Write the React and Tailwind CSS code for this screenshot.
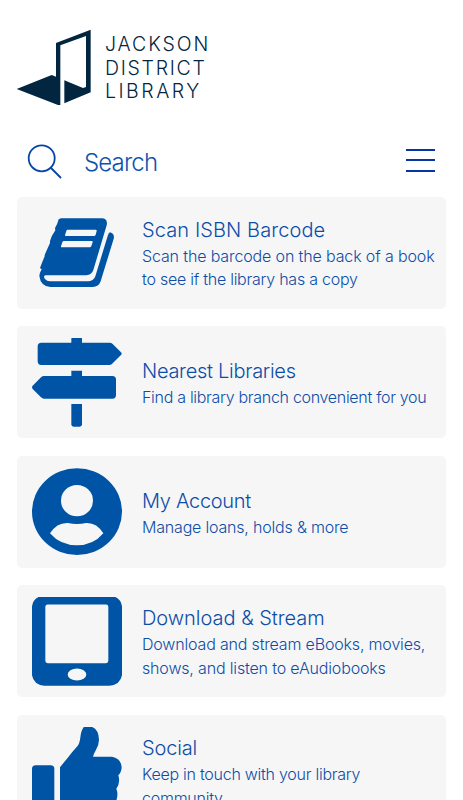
const cards = [
  {
    title: "Scan ISBN Barcode",
    titleClass: "tracking-[0.1px]",
    lines: [
      ["Scan the barcode on the back of a book", "tracking-[-0.13px]"],
      ["to see if the library has a copy", "tracking-[-0.25px]"],
    ],
    icon: BookIcon,
  },
  {
    title: "Nearest Libraries",
    titleClass: "tracking-[-0.28px]",
    lines: [["Find a library branch convenient for you", "tracking-[-0.3px]"]],
    icon: SignpostIcon,
  },
  {
    title: "My Account",
    titleClass: "tracking-[-0.3px]",
    lines: [["Manage loans, holds & more", "tracking-[-0.19px]"]],
    icon: AccountIcon,
  },
  {
    title: "Download & Stream",
    titleClass: "tracking-[-0.02px]",
    lines: [
      ["Download and stream eBooks, movies,", "tracking-[-0.17px]"],
      ["shows, and listen to eAudiobooks", "tracking-[-0.16px]"],
    ],
    icon: TabletIcon,
  },
  {
    title: "Social",
    titleClass: "tracking-[-0.15px]",
    lines: [
      ["Keep in touch with your library", "tracking-[-0.26px]"],
      ["community", "tracking-[-0.25px]"],
    ],
    icon: ThumbIcon,
  },
];

const iconClass = "mt-[2px] h-[90px] w-[90px] shrink-0 fill-[#0054a6]";

function BookIcon() {
  return (
    <svg viewBox="66 41 270 270" className={iconClass}>
      <path
        fillRule="evenodd"
        d="M153 69H278Q294 72 290 90L250 224Q245 239 229 240H107Q102 240 102 245Q105 257 121 258H236Q251 257 256 243L293 122Q296 112 300 111Q312 114 312 127L272 258Q266 275 248 275H121Q92 273 88 242Q89 232 95 222L90 218Q96 202 104 183V179Q110 165 120 143V137Q124 122 136 105L135 98Q142 88 146 72ZM173 103Q170 103 169 107L165 119Q164 122 168 122H252Q256 122 257 118L260 107Q261 103 257 103ZM162 137Q158 137 157 141L153 153Q152 156 156 156H239Q243 156 244 152L248 141Q249 137 245 137Z"
      />
    </svg>
  );
}

function SignpostIcon() {
  return (
    <svg viewBox="66 55 270 270" className={iconClass}>
      <path d="M184 69V58Q184 52 190 52H210Q216 52 216 58V69H299Q304 69 308 73L333 98Q337 102 333 106L308 131Q304 136 299 136H94Q83 136 83 125V80Q83 69 94 69Z" />
      <path d="M184 169V153H216V169H307Q318 169 318 180V226Q318 237 307 237H102Q97 237 93 233L68 208Q64 203 68 198L93 173Q97 169 102 169Z" />
      <path d="M184 253H216V314Q216 321 209 321H191Q184 321 184 314Z" />
    </svg>
  );
}

function AccountIcon() {
  return (
    <svg viewBox="66 39 270 270" className={iconClass}>
      <path
        fillRule="evenodd"
        d="M66 170A135 130 0 1 1 336 170A135 130 0 1 1 66 170ZM153 137A48 47 0 1 0 249 137A48 47 0 1 0 153 137ZM120 235Q151 271 201 271Q250 271 280 235Q260 202 228 204Q201 210 174 204Q141 202 120 235Z"
      />
    </svg>
  );
}

function TabletIcon() {
  return (
    <svg viewBox="66 52.5 270 270" className={iconClass}>
      <path
        fillRule="evenodd"
        d="M103 48H298Q331 51 336 80V287Q331 315 298 319H103Q71 315 66 287V80Q71 51 103 48ZM113 75Q106 75 106 82V244Q106 251 113 251H288Q295 251 295 244V82Q295 75 288 75ZM173 285A28 18 0 1 0 229 285A28 18 0 1 0 173 285Z"
      />
    </svg>
  );
}

function ThumbIcon() {
  return (
    <svg viewBox="66 66.6 270 270" className={iconClass}>
      <path d="M77 181H122Q133 181 133 192V340H66V192Q66 181 77 181Z" />
      <path d="M150 187L174 158Q187 140 202 124Q209 116 211 98Q213 76 222 66Q228 62 237 64Q266 68 267 105Q267 121 257 137Q250 149 249 156H306Q333 161 335 187Q334 203 325 211Q332 233 319 252Q326 270 318 290Q316 325 280 330H150Z" />
    </svg>
  );
}

function Logo() {
  return (
    <svg viewBox="48 27 228 231" className="h-[77px] w-[76px] shrink-0 fill-[#02263f]">
      <path d="M50 207L155 165L168 170V69L272 29V217L193 250V181L249 204L258 201V48L181 76V255H174Z" />
    </svg>
  );
}

function Card({ title, titleClass, lines, icon: Icon }) {
  return (
    <article className="flex h-[112px] shrink-0 items-center gap-5 rounded-[5px] bg-[#f6f6f6] pl-[15px]">
      <Icon />
      <div className="pt-0.5 text-[#0c4da8]">
        <h2 className={"text-[20px] leading-[29px] font-light whitespace-nowrap " + titleClass}>{title}</h2>
        {lines.map(([text, cls]) => (
          <p key={text} className={"text-[16px] leading-[23.5px] font-light whitespace-nowrap " + cls}>
            {text}
          </p>
        ))}
      </div>
    </article>
  );
}

export default function App() {
  return (
    <main className="h-[800px] w-[463px] overflow-hidden bg-white font-['Inter','Liberation_Sans',sans-serif]">
      <header className="flex gap-[13px] pt-[29px] pl-4">
        <Logo />
        <div className="pt-[4px] text-[19.5px] leading-[23.5px] font-[350] whitespace-nowrap text-[#02263f]">
          <div className="tracking-[1.9px]">JACKSON</div>
          <div className="tracking-[1.7px]">DISTRICT</div>
          <div className="tracking-[2.5px]">LIBRARY</div>
        </div>
      </header>
      <div className="flex h-[90.7px] items-center pt-[19px] pl-[27px]">
        <svg viewBox="0 0 36 36" className="mt-[2px] h-9 w-9 fill-none stroke-[#0746a6] stroke-[1.8]">
          <circle cx="14.7" cy="14.3" r="13" />
          <path d="M24 24L33.5 33.5" strokeLinecap="round" />
        </svg>
        <span className="mt-[5px] ml-[21px] text-[24px] font-light tracking-[-0.85px] text-[#0c54ae]">Search</span>
        <div className="mr-[28px] mb-[1px] ml-auto flex w-[29px] flex-col gap-[8.5px]">
          <div className="h-[2px] bg-[#0635a6]" />
          <div className="h-[2px] bg-[#0635a6]" />
          <div className="h-[2px] bg-[#0635a6]" />
        </div>
      </div>
      <section className="ml-[17px] flex w-[429px] flex-col gap-[17.6px]">
        {cards.map((card) => (
          <Card key={card.title} {...card} />
        ))}
      </section>
    </main>
  );
}
